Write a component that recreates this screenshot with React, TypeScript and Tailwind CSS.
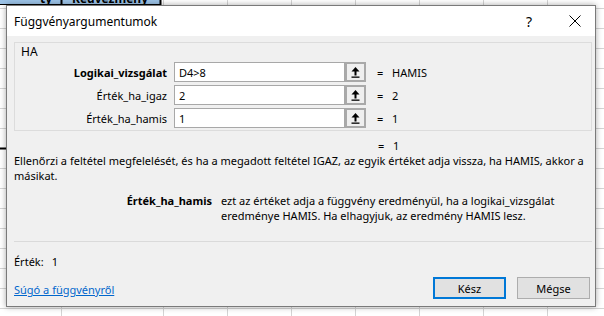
import React from "react";

const font = { fontFamily: '"Noto Sans", "Open Sans", Arial, sans-serif' };

function Background() {
  const vx = [61, 163, 227, 291, 355, 419, 483, 547];
  const hy: number[] = [];
  for (let y = 8; y < 316; y += 20) hy.push(y);
  return (
    <svg className="absolute inset-0" width="604" height="316" viewBox="0 0 604 316">
      <rect width="604" height="316" fill="#ffffff" />
      {hy.map((y) => (
        <line key={"h" + y} x1="0" y1={y + 0.5} x2="604" y2={y + 0.5} stroke="#d4d4d4" />
      ))}
      {vx.map((x) => (
        <line key={"v" + x} x1={x + 0.5} y1="0" x2={x + 0.5} y2="316" stroke="#d4d4d4" />
      ))}
      <rect x="0" y="0" width="161" height="4" fill="#9bc2e6" />
      <line x1="0" y1="4.5" x2="161" y2="4.5" stroke="#000" />
      <line x1="61.5" y1="0" x2="61.5" y2="5" stroke="#000" strokeWidth="2" />
      <line x1="160.5" y1="0" x2="160.5" y2="5" stroke="#000" strokeWidth="2" />
      <text x="110" y="3" textAnchor="middle" fontSize="12" fontWeight="bold" fontFamily="Noto Sans, sans-serif" fill="#000">Kedvezmény</text>
      <text x="52" y="3" textAnchor="end" fontSize="12" fontWeight="bold" fontFamily="Noto Sans, sans-serif" fill="#000">ty</text>
      <line x1="0" y1="148.5" x2="6" y2="148.5" stroke="#000" strokeWidth="2" />
    </svg>
  );
}

function UpArrow() {
  return (
    <svg width="9" height="11" viewBox="0 0 9 11">
      <polygon points="4.5,0 0.5,4.5 8.5,4.5" fill="#000" />
      <rect x="3.5" y="4" width="2" height="4.5" fill="#000" />
      <rect x="0.5" y="9.5" width="8" height="1.3" fill="#000" />
    </svg>
  );
}

function ArgRow({ label, value, result, bold }: { label: string; value: string; result: string; bold?: boolean }) {
  return (
    <div className="flex items-center h-[20px]">
      <div className={"w-[152px] mr-[7px] text-right whitespace-nowrap " + (bold ? "font-bold" : "")}>{label}</div>
      <div className="w-[171px] h-[20px] bg-white border border-[#a8a8a8] flex items-center pl-[4px]">{value}</div>
      <div className="w-[21px] h-[20px] border-2 border-[#a9a9a9] bg-[#efefef] flex items-center justify-center">
        <UpArrow />
      </div>
      <div className="ml-[11px] w-[15px]">=</div>
      <div>{result}</div>
    </div>
  );
}

export default function App() {
  return (
    <div className="relative w-[604px] h-[316px] overflow-hidden bg-white text-[11px] text-black" style={font}>
      <Background />
      <div className="absolute left-[6px] top-[5px] w-[590px] h-[302px] flex flex-col border border-[#7a7a7a] shadow-[0_0_6px_rgba(0,0,0,0.35)]">
        <div className="h-[30px] bg-white flex items-center pl-[7px] shrink-0">
          <span className="leading-[15px] text-[12px]">Függvényargumentumok</span>
          <div className="ml-auto flex items-center mr-[5px]">
            <div className="w-[30px] flex justify-center text-[14px] leading-[15px]">?</div>
            <div className="w-[30px] ml-[16px] flex justify-center">
              <svg width="12" height="12" viewBox="0 0 12 12">
                <path d="M0.5 0.5 L11.5 11.5 M11.5 0.5 L0.5 11.5" stroke="#000" strokeWidth="1" />
              </svg>
            </div>
          </div>
        </div>
        <div className="flex-1 bg-[#f0f0f0] pl-[7px] pr-[5px] pt-[6px] flex flex-col leading-[15px]">
          <div className="w-[578px] h-[89px] border border-[#dcdcdc] flex flex-col">
            <div className="pl-[6px] pt-[1px] text-[12px]">HA</div>
            <div className="mt-[3px] flex flex-col gap-[3px]">
              <ArgRow label="Logikai_vizsgálat" value="D4>8" result="HAMIS" bold />
              <ArgRow label="Érték_ha_igaz" value="2" result="2" />
              <ArgRow label="Érték_ha_hamis" value="1" result="1" />
            </div>
          </div>
          <div className="mt-[7px] flex pl-[364px]">
            <div className="w-[15px]">=</div>
            <div>1</div>
          </div>
          <div className="whitespace-nowrap">
            Ellenőrzi a feltétel megfelelését, és ha a megadott feltétel IGAZ, az egyik értéket adja vissza, ha HAMIS, akkor a
            <br />
            másikat.
          </div>
          <div className="mt-[10px] flex">
            <div className="w-[198px] text-right font-bold whitespace-nowrap">Érték_ha_hamis</div>
            <div className="ml-[9px] whitespace-nowrap">
              ezt az értéket adja a függvény eredményül, ha a logikai_vizsgálat
              <br />
              eredménye HAMIS. Ha elhagyjuk, az eredmény HAMIS lesz.
            </div>
          </div>
          <div className="mt-[18px] w-[578px] border-t border-[#dadada]" />
          <div className="mt-[12px] flex">
            <span>Érték:</span>
            <span className="ml-[8px]">1</span>
          </div>
          <div className="mt-[8px] flex items-center">
            <a className="text-[#0066cc] underline mt-[3px]">Súgó a függvényről</a>
            <div className="ml-auto flex gap-[11px]">
              <div className="w-[73px] h-[22px] border-2 border-[#0078d7] bg-[#e1e1e1] flex items-center justify-center">Kész</div>
              <div className="w-[73px] h-[22px] border border-[#adadad] bg-[#e1e1e1] flex items-center justify-center">Mégse</div>
            </div>
          </div>
        </div>
      </div>
    </div>
  );
}
